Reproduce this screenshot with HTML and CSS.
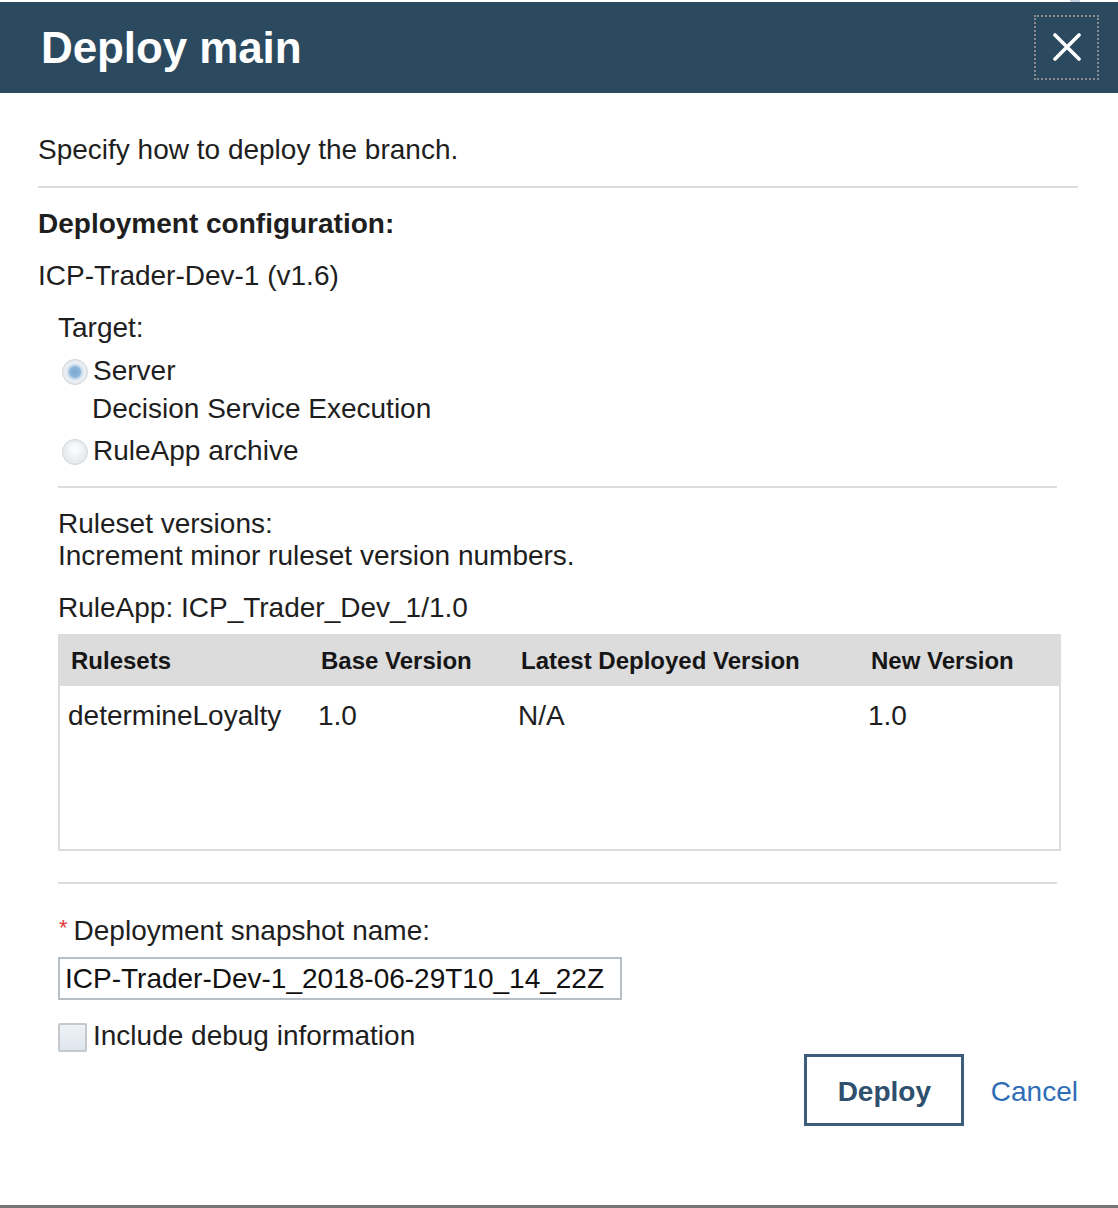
FILE: index.html
```html
<!DOCTYPE html>
<html lang="en">
<head>
<meta charset="utf-8">
<title>Deploy main</title>
<link rel="stylesheet" href="styles.css">
</head>
<body>
<div class="dialog">
  <div class="topstrip"><span class="topstrip-mark"></span></div>
  <header class="header">
    <h1 class="title">Deploy main</h1>
    <button class="close" aria-label="Close">
      <svg width="28" height="28" viewBox="0 0 28 28" aria-hidden="true">
        <path d="M2 2 L26 26 M26 2 L2 26" stroke="#ffffff" stroke-width="3.6" stroke-linecap="round" fill="none"/>
      </svg>
    </button>
  </header>
  <div class="content">
    <p class="text intro">Specify how to deploy the branch.</p>
    <div class="sep"></div>
    <p class="text section-title">Deployment configuration:</p>
    <p class="text config-name">ICP-Trader-Dev-1 (v1.6)</p>
    <div class="indent">
      <p class="text target-label">Target:</p>
      <div class="radio-row first">
        <span class="radio checked"></span>
        <span class="text">Server</span>
      </div>
      <div class="radio-sub text">Decision Service Execution</div>
      <div class="radio-row second">
        <span class="radio"></span>
        <span class="text">RuleApp archive</span>
      </div>
    </div>
    <div class="sep inner sep2"></div>
    <div class="indent">
      <p class="text versions">Ruleset versions:<br>Increment minor ruleset version numbers.</p>
      <p class="text ruleapp">RuleApp: ICP_Trader_Dev_1/1.0</p>
      <div class="table">
        <div class="thead">
          <div class="col c1">Rulesets</div>
          <div class="col c2">Base Version</div>
          <div class="col c3">Latest Deployed Version</div>
          <div class="col c4">New Version</div>
        </div>
        <div class="trow">
          <div class="col c1">determineLoyalty</div>
          <div class="col c2">1.0</div>
          <div class="col c3">N/A</div>
          <div class="col c4">1.0</div>
        </div>
      </div>
    </div>
    <div class="sep inner sep3"></div>
    <div class="indent">
      <p class="text snap-label"><span class="req">*</span>Deployment snapshot name:</p>
      <div class="input">ICP-Trader-Dev-1_2018-06-29T10_14_22Z</div>
      <div class="check-row">
        <span class="checkbox"></span>
        <span class="text">Include debug information</span>
      </div>
    </div>
    <div class="actions">
      <button class="btn-deploy">Deploy</button>
      <a class="cancel" href="#">Cancel</a>
    </div>
  </div>
</div>
</body>
</html>
```
FILE: styles.css
```css
* { box-sizing: border-box; }
html, body { margin: 0; padding: 0; background: #ffffff; }
body {
  font-family: "Liberation Sans", Arial, Helvetica, sans-serif;
  color: #1e1e1e;
  width: 1118px;
  height: 1208px;
  overflow: hidden;
}
.dialog {
  height: 1208px;
  border-bottom: 3px solid #767676;
  display: flex;
  flex-direction: column;
}
.topstrip {
  height: 2px;
  display: flex;
  justify-content: flex-end;
}
.topstrip-mark {
  width: 10px;
  height: 2px;
  background: #c6d3df;
  margin-right: 38px;
}
.header {
  height: 91px;
  background: #2b4a5f;
  display: flex;
  align-items: center;
  justify-content: space-between;
  padding: 0 19px 0 41px;
}
.title {
  margin: 0;
  font-size: 44px;
  font-weight: bold;
  color: #ffffff;
  line-height: 91px;
  letter-spacing: -0.1px;
}
.close {
  width: 65px;
  height: 65px;
  border: 2px dotted #8c8c8c;
  background: transparent;
  display: flex;
  align-items: center;
  justify-content: center;
  padding: 0;
  margin-top: -1px;
}
.content {
  padding: 41px 40px 0 38px;
}
.text {
  font-size: 28px;
  line-height: 32px;
  margin: 0;
}
.sep {
  height: 2px;
  background: #dddddd;
  margin-top: 20px;
}
.sep.inner {
  margin-left: 20px;
  margin-right: 21px;
}
.section-title {
  font-weight: bold;
  margin-top: 20px;
}
.config-name { margin-top: 20px; }
.indent { padding-left: 20px; }
.target-label { margin-top: 20px; }
.radio-row {
  display: flex;
  align-items: center;
  height: 38px;
}
.radio-row .text { line-height: 38px; }
.radio-row.first { margin-top: 8px; }
.radio-row.second { margin-top: 4px; }
.radio {
  width: 26px;
  height: 26px;
  border-radius: 50%;
  margin-left: 4px;
  margin-right: 5px;
  margin-top: 2px;
  border: 1px solid #cfd3d7;
  background: radial-gradient(circle at 50% 40%, #ffffff 0%, #eef1f4 45%, #d9dee3 100%);
  box-shadow: inset 0 0 0 2px #e9ecef;
  flex: none;
}
.radio.checked {
  background: radial-gradient(circle at 50% 50%, #79a9d3 0%, #8fb8dc 32%, #c8dbec 40%, #eef2f6 56%, #d6dce2 100%);
}
.radio-sub {
  padding-left: 34px;
  line-height: 38px;
}
.sep2 { margin-top: 16px; }
.versions { margin-top: 20px; }
.ruleapp { margin-top: 20px; }
.table {
  margin-top: 10px;
  height: 217px;
  width: 1003px;
  border: 2px solid #dcdcdc;
}
.thead {
  display: flex;
  height: 50px;
  background: #dcdcdc;
  align-items: center;
}
.thead .col {
  font-size: 24px;
  font-weight: bold;
  padding-left: 11px;
  color: #161616;
}
.trow {
  display: flex;
  padding-top: 14px;
}
.trow .col {
  font-size: 28px;
  line-height: 32px;
  padding-left: 8px;
}
.col.c1 { width: 250px; }
.col.c2 { width: 200px; }
.col.c3 { width: 350px; }
.col.c4 { width: 199px; }
.sep3 { margin-top: 31px; }
.snap-label { margin-top: 28px; }
.req {
  color: #e0393e;
  font-size: 22px;
  vertical-align: 5px;
  margin-right: 6px;
  margin-left: 1px;
}
.input {
  margin-top: 10px;
  width: 564px;
  height: 43px;
  border: 2px solid #b8bec6;
  font-size: 28px;
  line-height: 39px;
  padding-left: 5px;
  color: #111;
  white-space: nowrap;
}
.check-row {
  margin-top: 19px;
  height: 34px;
  display: flex;
  align-items: center;
}
.checkbox {
  width: 29px;
  height: 29px;
  margin-right: 6px;
  margin-top: 2px;
  border: 2px solid #c5c9ce;
  border-radius: 2px;
  background: linear-gradient(#eef2f6, #dfe6ed);
  flex: none;
}
.actions {
  display: flex;
  justify-content: flex-end;
  align-items: center;
  margin-top: 1px;
}
.btn-deploy {
  width: 160px;
  height: 72px;
  border: 3px solid #3b5c7b;
  background: #ffffff;
  color: #2e4f6d;
  font-family: "Liberation Sans", Arial, sans-serif;
  font-size: 28px;
  font-weight: bold;
  padding: 0 0 0 1px;
  line-height: 70px;
}
.cancel {
  margin-left: 27px;
  font-size: 28px;
  line-height: 32px;
  padding-top: 3px;
  color: #2f6db6;
  text-decoration: none;
}
```
